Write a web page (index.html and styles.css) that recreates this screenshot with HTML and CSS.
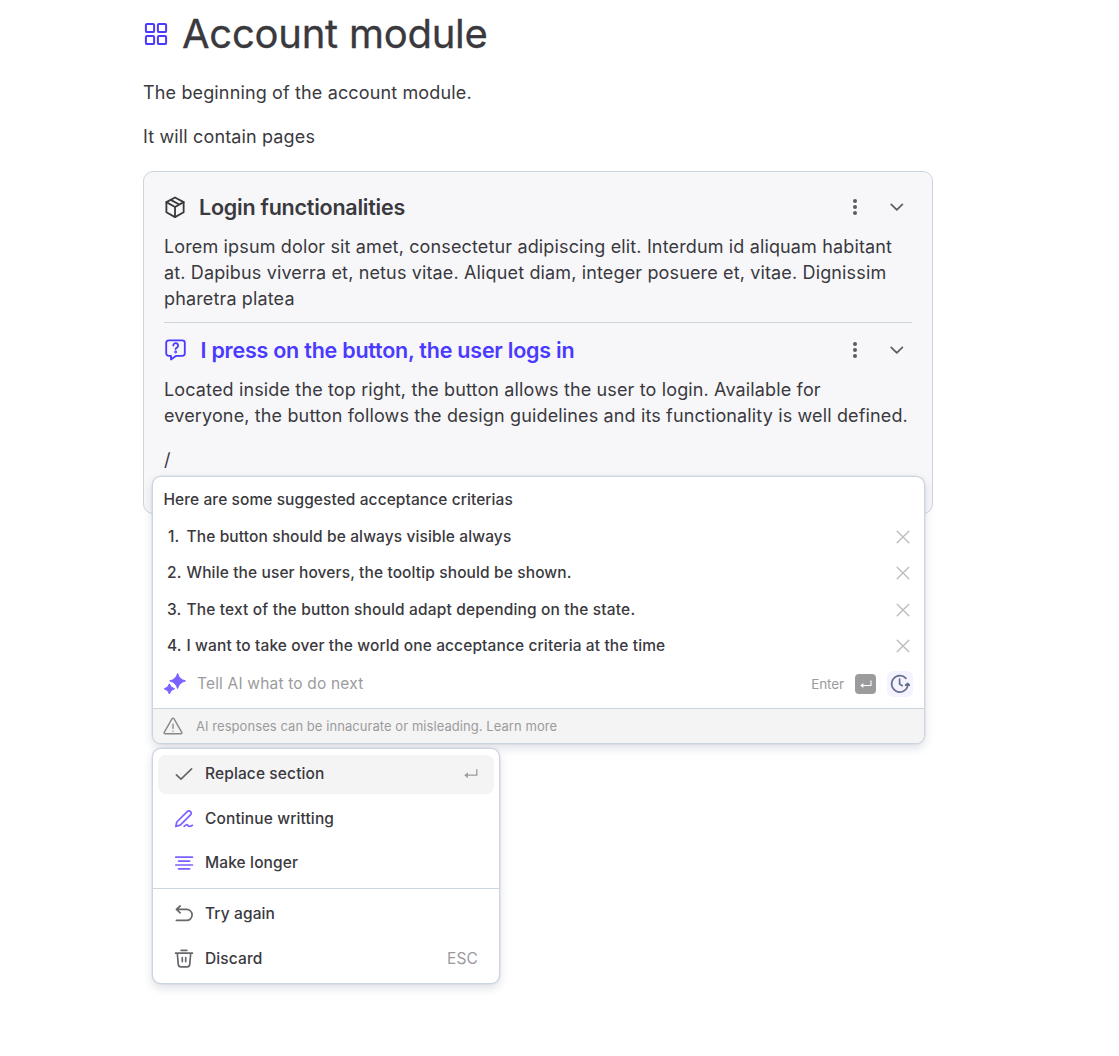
FILE: index.html
```html
<!DOCTYPE html>
<html lang="en">
<head>
<meta charset="utf-8">
<title>Account module</title>
<link rel="stylesheet" href="styles.css">
</head>
<body>
<svg class="defs" width="0" height="0" aria-hidden="true">
  <symbol id="dots" viewBox="0 0 24 24"><g fill="currentColor"><circle cx="12" cy="6" r="2"/><circle cx="12" cy="12" r="2"/><circle cx="12" cy="18" r="2"/></g></symbol>
  <symbol id="chevron" viewBox="0 0 24 24"><path d="M6.200 9.400l5.600 5.400 5.600-5.400" fill="none" stroke="currentColor" stroke-width="1.700" stroke-linecap="round" stroke-linejoin="round"/></symbol>
  <symbol id="close" viewBox="0 0 14 14"><path d="M1.200 1.200l11.600 11.600M12.800 1.200L1.200 12.800" fill="none" stroke="currentColor" stroke-width="1.400" stroke-linecap="round"/></symbol>
  <symbol id="enter" viewBox="0 0 14 10"><path d="M12.800.2v6H3" fill="none" stroke="currentColor" stroke-width="1.300"/><path d="M.3 6.200l3.600-3v6z" fill="currentColor"/></symbol>
</svg>
<main class="page">
  <header class="page-head">
    <svg class="module-icon" viewBox="0 0 24 24" fill="none" stroke="currentColor" stroke-width="2"><rect x="1.900" y="1.900" width="8.200" height="8.200" rx="1.200"/><rect x="13.900" y="1.900" width="8.200" height="8.200" rx="1.200"/><rect x="1.900" y="13.900" width="8.200" height="8.200" rx="1.200"/><rect x="13.900" y="13.900" width="8.200" height="8.200" rx="1.200"/></svg>
    <h1 class="title">Account module</h1>
  </header>
  <p class="text intro">The beginning of the account module.</p>
  <p class="text intro">It will contain pages</p>

  <section class="card">
    <div class="card-head">
      <svg class="head-icon" viewBox="0 0 24 24" fill="none" stroke="currentColor" stroke-width="1.900" stroke-linejoin="round" stroke-linecap="round"><path d="M11.500 1.600l9 4.800v10.600l-9 5-9-5V6.400z"/><path d="M2.500 6.400l9 5 9-5M11.500 11.400v10.600M7 4l9 4.900"/></svg>
      <h2 class="heading">Login functionalities</h2>
      <svg class="action"><use href="#dots"/></svg>
      <svg class="action"><use href="#chevron"/></svg>
    </div>
    <p class="text body">Lorem ipsum dolor sit amet, consectetur adipiscing elit. Interdum id aliquam habitant<br>at. Dapibus viverra et, netus vitae. Aliquet diam, integer posuere et, vitae. Dignissim<br>pharetra platea</p>
    <hr class="rule">
    <div class="card-head story">
      <svg class="head-icon" viewBox="0 0 24 24" fill="none" stroke="currentColor" stroke-width="1.900" stroke-linejoin="round" stroke-linecap="round"><path d="M5.100 2.400h14a2.600 2.600 0 0 1 2.600 2.600v11a2.600 2.600 0 0 1-2.600 2.600h-6.400L7.300 22.400v-3.800H4.900a2.600 2.600 0 0 1-2.600-2.600V5a2.600 2.600 0 0 1 2.800-2.600z"/><path d="M9.700 7.800a2.500 2.500 0 1 1 4 2c-1 .7-1.600 1-1.600 1.700"/><circle cx="12.100" cy="14.600" r=".5" fill="currentColor"/></svg>
      <h2 class="heading">I press on the button, the user logs in</h2>
      <svg class="action"><use href="#dots"/></svg>
      <svg class="action"><use href="#chevron"/></svg>
    </div>
    <p class="text body">Located inside the top right, the button allows the user to login. Available for<br>everyone, the button follows the design guidelines and its functionality is well defined.</p>
    <div class="text command">/
      <div class="overlay">
        <section class="panel assistant">
          <h3 class="assistant-title">Here are some suggested acceptance criterias</h3>
          <ol class="criteria">
            <li><span class="num first">1.</span><span>The button should be always visible always</span><svg class="close"><use href="#close"/></svg></li>
            <li><span class="num">2.</span><span>While the user hovers, the tooltip should be shown.</span><svg class="close"><use href="#close"/></svg></li>
            <li><span class="num">3.</span><span class="loose">The text of the button should adapt depending on the state.</span><svg class="close"><use href="#close"/></svg></li>
            <li><span class="num">4.</span><span>I want to take over the world one acceptance criteria at the time</span><svg class="close"><use href="#close"/></svg></li>
          </ol>
          <div class="prompt">
            <svg class="sparkle" viewBox="0 0 24 24" fill="currentColor" stroke="currentColor" stroke-linejoin="round"><path d="M14.600 1.500q1.600 6 7.900 7.400-6.300 1.600-7.900 7.600-1.600-6-7.900-7.600 6.300-1.400 7.900-7.400z"/><path d="M6.400 11.800q1 4 5.200 5-4.200 1-5.200 5.200-1-4.200-5.200-5.200 4.200-1 5.200-5z"/></svg>
            <span class="placeholder">Tell AI what to do next</span>
            <span class="enter-label">Enter</span>
            <span class="key"><svg class="key-icon"><use href="#enter"/></svg></span>
            <span class="history"><svg class="history-icon" viewBox="0 0 20 20" fill="none" stroke="currentColor" stroke-width="1.700" stroke-linecap="round" stroke-linejoin="round"><path d="M16 4.400A8.200 8.200 0 1 0 17.600 12.500V10.800M9.600 5.200v4.800l2.600 1.700"/><path d="M15.600 11.200l2-1.800 1.900 1.800z" fill="currentColor"/></svg></span>
          </div>
          <footer class="notice">
            <svg class="warning" viewBox="0 0 20 18" fill="none" stroke="currentColor" stroke-width="1.400" stroke-linejoin="round" stroke-linecap="round"><path d="M9.100 1.700a1 1 0 0 1 1.800 0l7.900 13.600a1 1 0 0 1-.9 1.500H2.100a1 1 0 0 1-.9-1.500z"/><path d="M10 7.200v4M10 13.900v.1"/></svg>
            <span>AI responses can be innacurate or misleading. Learn more</span>
          </footer>
        </section>
        <nav class="panel menu">
          <div class="item selected"><svg class="item-icon dark" viewBox="0 0 20 20"><path d="M2.400 10.800l4.600 4.400L17.600 4.800"/></svg><span>Replace section</span><svg class="return"><use href="#enter"/></svg></div>
          <div class="item"><svg class="item-icon violet" viewBox="0 0 20 20"><path d="M1.800 17.400l1-4.400L13.200 2.600a2.300 2.300 0 0 1 3.300 3.300L6.200 16.100zM10.200 17.400c1.600-2 3-2.200 3.700-.9s2 1.300 4.500-.2"/></svg><span>Continue writting</span></div>
          <div class="item"><svg class="item-icon violet" viewBox="0 0 20 20"><path d="M1.800 4.200h16.600M4.600 8.100h11M1.800 12h16.600M4.600 15.900h11"/></svg><span>Make longer</span></div>
          <hr class="menu-rule">
          <div class="item"><svg class="item-icon dark" viewBox="0 0 20 20"><path d="M6.200 2L2.400 5.400l3.800 3.400M2.600 5.400h10a5.500 5.500 0 0 1 0 11H2.400"/></svg><span>Try again</span></div>
          <div class="item"><svg class="item-icon dark" viewBox="0 0 20 20"><path d="M7.200 1.400h5.600M1.600 4.200h16.800M3.300 4.400l1 11.200a2.500 2.500 0 0 0 2.500 2.200h6.400a2.500 2.500 0 0 0 2.500-2.200l1-11.200M8.300 8.600v4M11.700 8.600v4"/></svg><span>Discard</span><span class="esc">ESC</span></div>
        </nav>
      </div>
    </div>
  </section>
</main>
</body>
</html>
```
FILE: styles.css
```css
* { box-sizing: border-box; }
body { margin: 0; height: 1056px; overflow: hidden; background: #fff; color: #3a393e; font-family: Inter, "Liberation Sans", sans-serif; font-optical-sizing: none; }
h1, h2, h3, p, ol { margin: 0; padding: 0; font-weight: 400; }
svg { display: block; flex: none; }
.defs { position: absolute; }
.page { width: 790px; margin-left: 143px; padding-top: 10px; }
.page-head { display: flex; align-items: center; height: 48px; }
.module-icon { width: 24px; height: 24px; margin: 0 1px 1px; color: #4a3aff; }
.title { margin-left: 13px; font-size: 40px; line-height: 48px; letter-spacing: -.25px; white-space: nowrap; -webkit-text-stroke: .3px currentColor; }
.text { font-size: 18px; line-height: 26.2px; letter-spacing: .14px; white-space: nowrap; }
.intro { margin-top: 18.6px; }
.page-head + .intro { margin-top: 21.6px; }
.card { height: 343.5px; margin-top: 20.1px; padding: 19.5px 20px 0; border: 1px solid #ccd4de; border-radius: 10px; background: #f7f7fa; }
.card-head { display: flex; align-items: center; height: 32px; }
.head-icon { width: 23px; height: 23px; }
.heading { flex: 1; margin-left: 12px; font-size: 21.5px; font-weight: 600; line-height: 32px; letter-spacing: -.23px; white-space: nowrap; }
.story .heading { margin-left: 13.5px; }
.action { width: 24px; height: 24px; margin-left: 18px; color: #5c5b60; }
.card-head .action:last-child { margin-right: 3px; }
.body { margin-top: 10.5px; }
.rule { height: 1.5px; margin: 9.5px 0 10.5px; border: 0; background: #ccd4de; }
.story { color: #4a3aff; }
.story + .body { margin-top: 10.9px; }
.command { position: relative; height: 26px; margin-top: 18.1px; }
.overlay { position: absolute; top: 29px; left: -12px; width: 773px; display: flex; flex-direction: column; align-items: flex-start; gap: 4px; }
.panel { border: 1px solid #ccd4de; border-radius: 9px; background: #fff; box-shadow: 0 0 0 .5px rgba(200, 209, 220, .6), 0 4px 10px rgba(30, 40, 75, .15); overflow: hidden; line-height: 24px; }
.assistant { width: 773px; height: 268px; padding-top: 10.5px; }
.assistant-title { height: 30.7px; padding-left: 10.5px; font-size: 15.5px; font-weight: 500; line-height: 24px; letter-spacing: .08px; }
.criteria { list-style: none; }
.criteria li { display: flex; align-items: center; height: 36.6px; padding: 0 14.5px 0 14px; font-size: 15.5px; font-weight: 500; letter-spacing: .12px; }
.num { width: 19.5px; }
.first { padding-left: 1px; }
.loose { letter-spacing: .16px; }
.close { width: 14px; height: 14px; margin-left: auto; color: #bdbdbf; }
.prompt { display: flex; align-items: center; height: 39px; margin-bottom: 3.8px; padding: 0 11px 0 10px; color: #9b9b9e; }
.sparkle { width: 24px; height: 24px; color: #7b61ff; }
.placeholder { margin-left: 10px; font-size: 15.5px; letter-spacing: .18px; }
.enter-label { margin-left: auto; font-size: 13.5px; letter-spacing: -.1px; }
.key { display: flex; align-items: center; justify-content: center; width: 21px; height: 20px; margin-left: 11px; border-radius: 4px; background: #9b9b9e; color: #fff; }
.key-icon { width: 12px; height: 9px; }
.history { display: flex; align-items: center; justify-content: center; width: 26px; height: 26px; margin-left: 11px; border-radius: 6px; background: #f5f3ff; color: #66708a; }
.history-icon { width: 20px; height: 20px; }
.notice { display: flex; align-items: center; height: 36px; padding-left: 10px; border-top: 1px solid #ccd4de; background: #f4f4f4; color: #9b9b9e; font-size: 13px; letter-spacing: .06px; }
.warning { width: 20px; height: 18px; margin-right: 13px; color: #88888b; }
.menu { width: 348px; height: 236px; padding-top: 5.5px; }
.item { display: flex; align-items: center; height: 39px; margin: 0 5px 5.5px; padding: 0 16px; border-radius: 8px; font-size: 15.5px; font-weight: 500; letter-spacing: .12px; }
.selected { background: #f4f4f4; }
.item-icon { width: 20px; height: 20px; margin-right: 11px; fill: none; stroke: currentColor; stroke-width: 1.7; stroke-linecap: round; stroke-linejoin: round; }
.dark { color: #68676b; }
.violet { color: #7b61ff; }
.return { width: 14px; height: 10px; margin-left: auto; color: #9b9b9e; }
.menu-rule { height: 1px; margin: 0 0 5.5px; border: 0; background: #ccd4de; }
.esc { margin-left: auto; color: #9b9b9e; font-weight: 400; }
```
